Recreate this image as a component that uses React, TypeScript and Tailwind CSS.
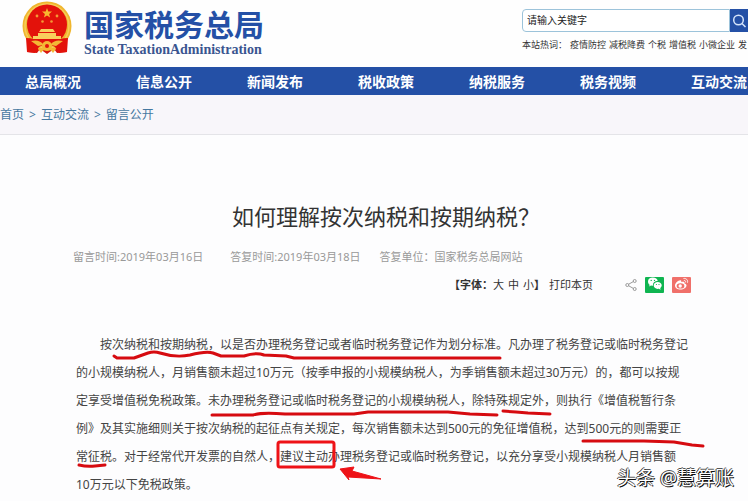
import type { ReactNode } from "react";

const navItems = ["总局概况", "信息公开", "新闻发布", "税收政策", "纳税服务", "税务视频", "互动交流"];
const hotWords = ["疫情防控", "减税降费", "个税", "增值税", "小微企业", "发"];

const lines = [
  "按次纳税和按期纳税，以是否办理税务登记或者临时税务登记作为划分标准。凡办理了税务登记或临时税务登记",
  "的小规模纳税人，月销售额未超过10万元（按季申报的小规模纳税人，为季销售额未超过30万元）的，都可以按规",
  "定享受增值税免税政策。未办理税务登记或临时税务登记的小规模纳税人，除特殊规定外，则执行《增值税暂行条",
  "例》及其实施细则关于按次纳税的起征点有关规定，每次销售额未达到500元的免征增值税，达到500元的则需要正",
  "常征税。对于经常代开发票的自然人，建议主动办理税务登记或临时税务登记，以充分享受小规模纳税人月销售额",
  "10万元以下免税政策。",
];

function Emblem() {
  return (
    <svg viewBox="0 0 52 56" className="h-14 w-[52px] shrink-0" aria-hidden="true">
      <path d="M7 38 L6 52 L16 53 L19 49 L26 54 L33 49 L36 53 L46 52 L45 38Z" fill="#d9160f" />
      <circle cx="26" cy="26" r="24.5" fill="#f0b62e" />
      <circle cx="26" cy="26" r="22" fill="none" stroke="#f6cd57" strokeWidth="1.5" />
      <circle cx="26" cy="24.5" r="20" fill="#e3120b" />
      <path d="M26 8 L27.3 11.4 L31 11.6 L28.1 13.9 L29.1 17.4 L26 15.4 L22.9 17.4 L23.9 13.9 L21 11.6 L24.7 11.4Z" fill="#f8b830" />
      <g fill="#f49a35">
        <circle cx="16" cy="16" r="1.4" />
        <circle cx="36" cy="16" r="1.4" />
        <circle cx="21.500" cy="21.500" r="1.3" />
        <circle cx="30.500" cy="21.500" r="1.3" />
      </g>
      <path d="M20 29h12l2 3H18z M17 33h18v3H17z M12 36h28v3H12z" fill="#f9cf5d" />
      <path d="M5 38 Q14 38 20 43 H32 Q38 38 47 38 L46 52 L38 53 L34 47 L26 43 L18 47 L14 53 L6 52Z" fill="#e3120b" />
      <path d="M10 41 Q18 39 22 44 H30 Q34 39 42 41 L35 46 L30 45 L26 48 L22 45 L17 46Z" fill="#f3b735" />
      <circle cx="26" cy="46" r="5" fill="#f3b735" />
      <circle cx="26" cy="46" r="2" fill="#e3120b" />
      <path d="M17 49l6 0-3 4z M35 49l-6 0 3 4z" fill="#f3b735" />
    </svg>
  );
}

function ShareIcon() {
  return (
    <svg viewBox="0 0 12 14" className="h-[14px] w-3" fill="none" stroke="#999" aria-hidden="true">
      <path d="M3.500 6.300 8.500 3.500M3.500 7.700l5 2.800" />
      <circle cx="2.300" cy="7" r="1.500" />
      <circle cx="9.700" cy="3" r="1.500" />
      <circle cx="9.700" cy="11" r="1.500" />
    </svg>
  );
}

function WechatIcon() {
  return (
    <svg viewBox="0 0 19 16" className="h-4 w-[19px]" aria-hidden="true">
      <rect width="19" height="16" rx="1" fill="#0fb551" />
      <path d="M3 4.500C3 2 5 .5 7.800.5s4.700 1.500 4.900 3.500C9.500 4 7.700 6 8 8.700L6 8.500 4.200 9.600l.4-1.800C3.500 7 3 5.900 3 4.500z" fill="#fff" />
      <path d="M8.700 8.300C8.700 6.200 10.500 4.900 12.700 4.900s4 1.400 4 3.400c0 1.200-.6 2.100-1.500 2.800l.4 1.700-1.800-1c-2.900.6-5.100-1.200-5.100-3.500z" fill="#fff" />
      <g fill="#0fb551">
        <circle cx="6.200" cy="3.400" r=".7" />
        <circle cx="9.500" cy="3.400" r=".7" />
        <circle cx="11.400" cy="7.500" r=".6" />
        <circle cx="14" cy="7.500" r=".6" />
      </g>
    </svg>
  );
}

function WeiboIcon() {
  return (
    <svg viewBox="0 0 19 16" className="h-4 w-[19px]" aria-hidden="true">
      <rect width="19" height="16" rx="1" fill="#f0706a" />
      <path d="M3 8.500C3 6 6.500 3 8.500 3.300c1 .2.900 1 .7 1.800 1.800-.8 3.900-.5 3.300 1.400 1.200.4 2 1 2 2.100 0 2.200-2.800 4-6 4S3 10.900 3 8.500z" fill="#fff" />
      <ellipse cx="8.500" cy="8.900" rx="3.900" ry="2.600" fill="#f0706a" />
      <circle cx="8.200" cy="9" r="1.700" fill="#fff" />
      <path d="M11.500 1.500c2.600-.5 4.700 1.500 4 4.200M11.900 3.500c1.200-.2 2 .6 1.700 1.900" fill="none" stroke="#fff" strokeWidth=".9" />
    </svg>
  );
}

// Hand-drawn red marks laid over the answer text
function Marks() {
  return (
    <svg viewBox="0 0 748 180" className="pointer-events-none absolute left-0 top-0 h-[180px] w-[748px]" aria-hidden="true">
      <g fill="none" stroke="#d60b10" strokeWidth="3" strokeLinecap="round" strokeLinejoin="round">
        <path d="M114 25 L117 27 H134 L148 22 Q154 20 160 22 Q176 27 190 24 Q206 20 213 22 L221 25 H244 Q256 21 264 24 L286 25 L294 27 H378 L500 27" />
        <path d="M212 84 H253 Q262 81 285 83 H354 L368 81 H448 L470 83 L497 84" />
        <path d="M503 80 L516 81 L528 82 L550 83" />
        <path d="M583 110 H644 L674 111 L692 114 L703 115" />
        <path d="M79 134 Q87 136 95 135 L105 134" />
        <rect x="278" y="111" width="56" height="25" rx="2" stroke="#ee1217" />
      </g>
      <path d="M340 138 L354 136 L352 140 L381 148 L348 146 L349 149Z" fill="#ee1217" stroke="#ee1217" strokeLinejoin="round" />
    </svg>
  );
}

function Crumb({ children }: { children: ReactNode }) {
  return <a href="#">{children}</a>;
}

export default function App() {
  return (
    <div className="relative min-h-screen overflow-hidden bg-[#fdfdfe] font-['Noto_Sans','Noto_Sans_CJK_SC',sans-serif] text-[#444]">
      <header className="flex h-[67px] items-start justify-between bg-[#fefefe]">
        <div className="flex gap-[11px] pl-[21px]">
          <Emblem />
          <div className="pt-2">
            <div className="text-[30px] leading-[34px] font-bold text-[#2450a6]">国家税务总局</div>
            <div className="font-['Liberation_Serif',serif] text-[14px] leading-4 font-bold whitespace-nowrap text-[#3a5590]">
              State TaxationAdministration
            </div>
          </div>
        </div>
        <div className="w-[226px] shrink-0 pt-[9px]">
          <form className="flex h-[23px]">
            <input
              type="text"
              aria-label="关键字"
              placeholder="请输入关键字"
              className="min-w-0 flex-1 rounded-l-sm border border-[#9cc3da] bg-white px-1 text-[10px] outline-none placeholder:text-[#222]"
            />
            <button type="button" aria-label="搜索" className="flex w-[18px] shrink-0 items-center justify-center overflow-hidden bg-[#2450a6]">
              <svg viewBox="0 0 14 14" className="h-[14px] w-[14px]" fill="none" stroke="#d5e4fa" strokeWidth="1.500" aria-hidden="true">
                <circle cx="6.500" cy="6" r="4.800" />
                <path d="m10 9.500 3.500 3.500" />
              </svg>
            </button>
          </form>
          <div className="mt-[5px] flex gap-[3px] text-[9px] leading-4 whitespace-nowrap text-[#333]">
            <span>本站热词：</span>
            {hotWords.map((word) => (
              <a key={word} href="#">{word}</a>
            ))}
          </div>
        </div>
      </header>

      <nav className="flex h-7 items-center gap-[55px] bg-[#2450a6] pl-[25px] text-[14px] font-bold text-white">
        {navItems.map((item) => (
          <a key={item} href="#" className="shrink-0">{item}</a>
        ))}
      </nav>

      <div className="flex h-10 items-center gap-[5px] border-b border-[#e4e4e8] bg-[#f8f6fa] text-[12px] text-[#4678a0]">
        <Crumb>首页</Crumb>
        <span>&gt;</span>
        <Crumb>互动交流</Crumb>
        <span>&gt;</span>
        <Crumb>留言公开</Crumb>
      </div>

      <main>
        <h1 className="pt-[65px] pl-6 text-center text-[22px] leading-8 text-[#333]">如何理解按次纳税和按期纳税？</h1>

        <div className="mt-4 flex gap-[19px] pl-[73px] text-[11px] leading-[18px] text-[#999]">
          <span className="mr-2">留言时间:2019年03月16日</span>
          <span>答复时间:2019年03月18日</span>
          <span>答复单位：国家税务总局网站</span>
        </div>

        <div className="mt-2 flex h-[22px] items-center justify-end pr-[57px] text-[11px] text-[#333]">
          <span className="font-bold">【字体：</span>
          <button type="button">大</button>
          <button type="button" className="ml-1">中</button>
          <button type="button" className="ml-1">小</button>
          <span className="font-bold">】</span>
          <button type="button" className="mr-8 ml-1">打印本页</button>
          <a href="#" aria-label="分享"><ShareIcon /></a>
          <a href="#" aria-label="微信" className="ml-2"><WechatIcon /></a>
          <a href="#" aria-label="微博" className="ml-2"><WeiboIcon /></a>
        </div>

        <div className="relative mt-[35px]">
          <p className="pl-[76px] indent-6 text-[12px] leading-7 whitespace-nowrap">
            {lines.map((line) => (
              <span key={line}>
                {line}
                <br />
              </span>
            ))}
          </p>
          <Marks />
        </div>
      </main>

      <div className="absolute right-[14px] bottom-[11px] text-[19px] leading-6 text-white [text-shadow:1px_1px_0_#111,-1px_0_0_#333,0_-1px_0_#555]">
        头条 @慧算账
      </div>
    </div>
  );
}
